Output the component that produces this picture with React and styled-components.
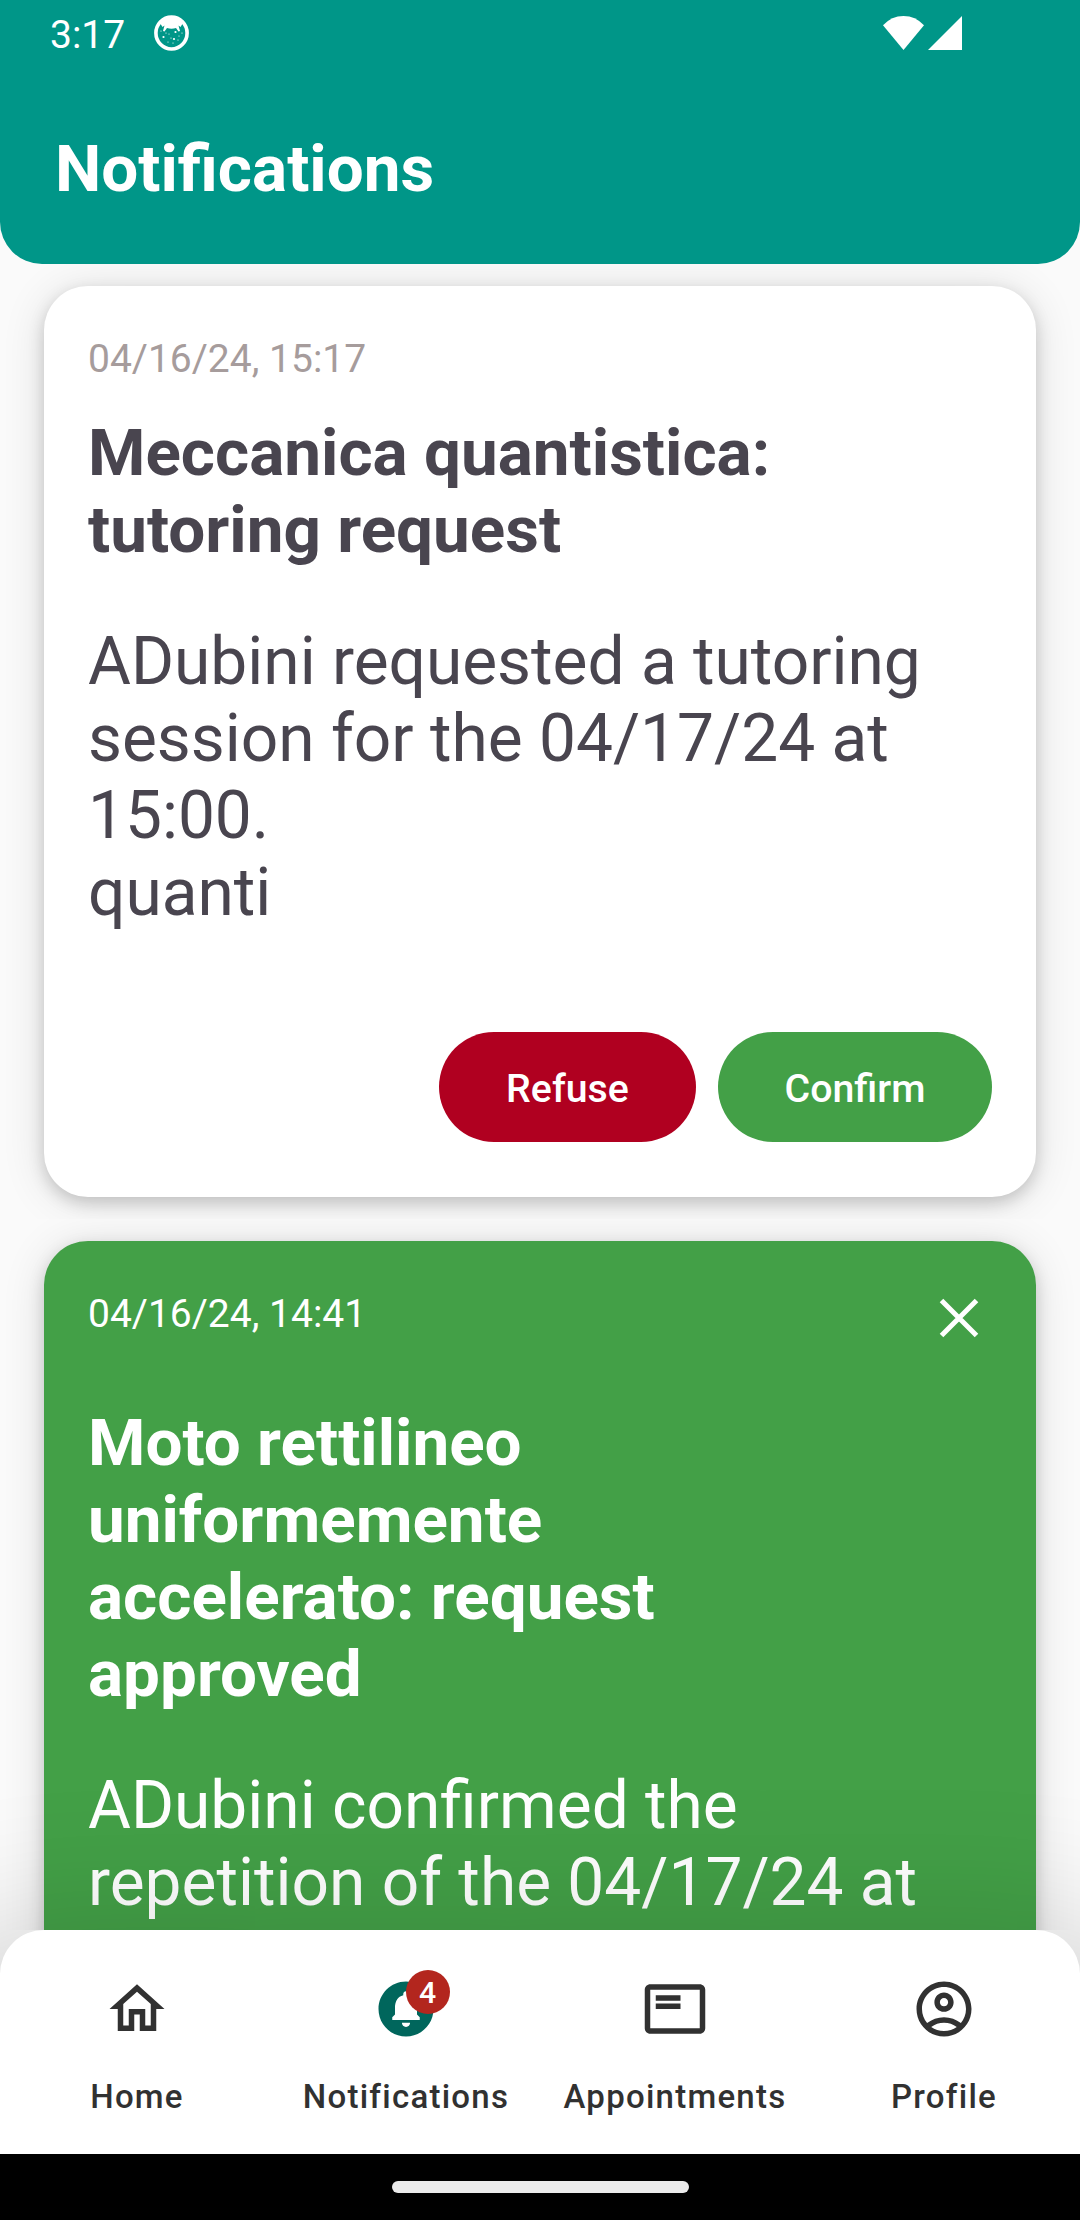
import React from "react";
import styled, { createGlobalStyle } from "styled-components";

const GlobalStyle = createGlobalStyle`
  *, *::before, *::after { box-sizing: border-box; }
  body { margin: 0; background: #fafafa; }
  h1, h2, p { margin: 0; }
  button { border: 0; background: none; padding: 0; font: inherit; color: inherit; }
`;

const Screen = styled.div`
  display: flex;
  flex-direction: column;
  width: 1080px;
  height: 2220px;
  overflow: hidden;
  background: #fafafa;
  font-family: Roboto, sans-serif;
`;

const Header = styled.header`
  flex: none;
  height: 264px;
  background: #009688;
  border-radius: 0 0 42px 42px;
  color: #fff;
`;

const StatusBar = styled.div`
  display: flex;
  align-items: center;
  height: 66px;
  padding: 0 118px 0 50px;
`;

const Clock = styled.span`
  font-size: 39px;
  line-height: 66px;
  height: 66px;
  margin-top: 4px;
`;

const StatusIcon = styled.svg`
  display: block;
  margin-left: ${(p) => p.$gap || "0"};
`;

const PageTitle = styled.h1`
  font-size: 65.6px;
  font-weight: 700;
  line-height: 77px;
  padding: 64px 55px 0;
`;

const Feed = styled.main`
  flex: 1;
  min-height: 0;
  overflow: hidden;
`;

const FeedItem = styled.div`
  padding: 22px 44px;
  overflow: hidden;
`;

const Card = styled.article`
  height: ${(p) => p.$height};
  padding: 44px 44px 0;
  border-radius: 44px;
  background: ${(p) => (p.$approved ? "#43a047" : "#fff")};
  color: ${(p) => (p.$approved ? "#fff" : "#49454f")};
  box-shadow: 0 6px 16px rgba(0, 0, 0, 0.17), 0 4px 44px rgba(0, 0, 0, 0.12);
`;

const CardTop = styled.div`
  display: flex;
  justify-content: space-between;
  align-items: flex-start;
`;

const DateText = styled.time`
  padding-top: 2px;
  font-size: 39px;
  line-height: 54px;
  color: ${(p) => (p.$light ? "#fff" : "#a69c9c")};
`;

const CloseButton = styled.button`
  display: block;
  width: 66px;
  height: 66px;
`;

const CardTitle = styled.h2`
  width: ${(p) => p.$width || "auto"};
  margin-top: ${(p) => p.$gap};
  font-size: 65.6px;
  font-weight: 700;
  line-height: 77px;
`;

const CardBody = styled.p`
  margin-top: 55px;
  font-size: 65.8px;
  line-height: 77px;
  white-space: pre-line;
`;

const Actions = styled.div`
  display: flex;
  justify-content: flex-end;
  gap: 22px;
  margin-top: 101px;
`;

const ActionButton = styled.button`
  width: ${(p) => p.$width};
  height: 110px;
  padding-top: 3px;
  border-radius: 55px;
  background: ${(p) => p.$color};
  color: #fff;
  font-size: 39.3px;
  font-weight: 500;
`;

const NavBar = styled.nav`
  position: relative;
  flex: none;
  display: grid;
  grid-template-columns: repeat(4, 269px);
  height: 224px;
  padding: 46px 0 0 2px;
  border-radius: 44px 44px 0 0;
  background: #fff;
  color: #313131;
  box-shadow: 0 100px 150px 100px rgba(0, 0, 0, 0.16);
`;

const NavItem = styled.button`
  display: flex;
  flex-direction: column;
  align-items: center;
`;

const IconSlot = styled.span`
  position: relative;
  width: 66px;
  height: 66px;
  color: ${(p) => (p.$active ? "#00665c" : "inherit")};
`;

const NavLabel = styled.span`
  margin: 33px 0 0 1px;
  font-size: 33px;
  font-weight: 500;
  line-height: 44px;
  letter-spacing: 1.25px;
`;

const Badge = styled.span`
  position: absolute;
  top: -6px;
  left: 33px;
  width: 44px;
  height: 44px;
  border-radius: 50%;
  background: #b3261e;
  color: #fff;
  font-size: 30.25px;
  font-weight: 500;
  line-height: 46px;
  text-align: center;
`;

const GestureBar = styled.footer`
  position: relative;
  flex: none;
  display: flex;
  justify-content: center;
  height: 66px;
  padding-top: 27px;
  background: #000;
`;

const Handle = styled.div`
  width: 297px;
  height: 12px;
  border-radius: 6px;
  background: #ebebeb;
`;

const MaterialIcon = ({ d }) => (
  <svg width="66" height="66" viewBox="0 0 24 24" fill="currentColor" fillRule="evenodd" display="block">
    <path d={d} />
  </svg>
);

const icons = {
  home: "M12 5.69l5 4.5V18h-2v-6H9v6H7v-7.81l5-4.5M12 3L2 12h3v8h6v-6h2v6h6v-8h3L12 3z",
  bell: "M12 2C6.48 2 2 6.48 2 12s4.48 10 10 10 10-4.48 10-10S17.52 2 12 2zm0 16.5c-.83 0-1.5-.67-1.5-1.5h3c0 .83-.67 1.5-1.5 1.5zm5-2.5H7v-1l1-1v-2.61C8 9.27 9.03 7.47 11 7v-.5c0-.57.43-1 1-1s1 .43 1 1V7c1.97.47 3 2.28 3 4.39V14l1 1v1z",
  list: "M21 3H3c-1.1 0-2 .9-2 2v14c0 1.1.9 2 2 2h18c1.1 0 2-.9 2-2V5c0-1.1-.9-2-2-2zm0 16H3V5h18v14zM5 10h9v2H5zM5 7h9v2H5z",
  profile:
    "M12 2C6.48 2 2 6.48 2 12s4.48 10 10 10 10-4.48 10-10S17.52 2 12 2zM7.35 18.5C8.66 17.56 10.26 17 12 17s3.34.56 4.65 1.5c-1.31.94-2.91 1.5-4.65 1.5s-3.34-.56-4.65-1.5zm10.79-1.38C16.45 15.8 14.32 15 12 15s-4.45.8-6.14 2.12C4.7 15.73 4 13.95 4 12c0-4.42 3.58-8 8-8s8 3.58 8 8c0 1.95-.7 3.73-1.86 5.12zM12 6c-1.93 0-3.5 1.57-3.5 3.5S10.07 13 12 13s3.5-1.57 3.5-3.5S13.93 6 12 6zm0 5c-.83 0-1.5-.67-1.5-1.5S11.17 8 12 8s1.5.67 1.5 1.5S12.83 11 12 11z",
};

const navItems = [
  { label: "Home", icon: icons.home },
  { label: "Notifications", icon: icons.bell, active: true, badge: 4 },
  { label: "Appointments", icon: icons.list },
  { label: "Profile", icon: icons.profile },
];

export default function App() {
  return (
    <Screen>
      <GlobalStyle />
      <Header>
        <StatusBar>
          <Clock>3:17</Clock>
          <StatusIcon $gap="29px" width="35" height="36" viewBox="0 0 35 36">
            <ellipse cx="17.5" cy="18" rx="15.6" ry="16" fill="none" stroke="#fff" strokeWidth="3.6" />
            <path d="M6 8 L10 3 H25 L29 8 L26.500 12 L24.500 10.500 L26 16 L24.500 16.500 L22 13 Q17.500 14.500 13 13 L10.500 16.500 L9 16 L10.500 10.500 L8.500 12 Z" fill="#fff" />
            <g fill="#fff">
              <circle cx="9.5" cy="22" r="1.1" />
              <circle cx="21.5" cy="17" r="1.1" />
              <circle cx="20" cy="24" r="1.1" />
              <circle cx="15" cy="19" r=".6" />
              <circle cx="14" cy="27" r=".6" />
              <circle cx="25" cy="21" r=".6" />
              <circle cx="7" cy="16" r=".6" />
              <circle cx="12" cy="18" r=".6" />
              <circle cx="28" cy="18" r=".6" />
              <circle cx="17" cy="23" r=".6" />
              <circle cx="19" cy="28" r=".6" />
              <circle cx="24" cy="25" r=".6" />
            </g>
          </StatusIcon>
          <StatusIcon $gap="auto" width="41" height="34" viewBox="0 0 41 34">
            <path d="M0 9.3 Q8.5 0 20.5 0 Q32.500 0 41 9.300 L20.500 34 Z" fill="#fff" />
          </StatusIcon>
          <StatusIcon $gap="4px" width="34" height="34" viewBox="0 0 34 34">
            <path d="M34 0V34H0Z" fill="#fff" />
          </StatusIcon>
        </StatusBar>
        <PageTitle>Notifications</PageTitle>
      </Header>

      <Feed>
        <FeedItem>
          <Card $height="911px">
            <CardTop>
              <DateText>04/16/24, 15:17</DateText>
            </CardTop>
            <CardTitle $gap="28px">Meccanica quantistica: tutoring request</CardTitle>
            <CardBody>{"ADubini requested a tutoring session for the 04/17/24 at 15:00.\nquanti"}</CardBody>
            <Actions>
              <ActionButton $width="257px" $color="#b00020">Refuse</ActionButton>
              <ActionButton $width="274px" $color="#43a047">Confirm</ActionButton>
            </Actions>
          </Card>
        </FeedItem>
        <FeedItem>
          <Card $approved $height="911px">
            <CardTop>
              <DateText $light>04/16/24, 14:41</DateText>
              <CloseButton aria-label="Dismiss">
                <svg width="66" height="66" viewBox="0 0 66 66" display="block">
                  <path d="M15.5 15.500L50.500 50.500M50.500 15.500L15.500 50.500" stroke="#fff" strokeWidth="5" />
                </svg>
              </CloseButton>
            </CardTop>
            <CardTitle $gap="53px" $width="600px">
              Moto rettilineo uniformemente accelerato: request approved
            </CardTitle>
            <CardBody>ADubini confirmed the repetition of the 04/17/24 at</CardBody>
          </Card>
        </FeedItem>
      </Feed>

      <NavBar>
        {navItems.map((item) => (
          <NavItem key={item.label}>
            <IconSlot $active={item.active}>
              <MaterialIcon d={item.icon} />
              {item.badge && <Badge>{item.badge}</Badge>}
            </IconSlot>
            <NavLabel>{item.label}</NavLabel>
          </NavItem>
        ))}
      </NavBar>
      <GestureBar>
        <Handle />
      </GestureBar>
    </Screen>
  );
}
